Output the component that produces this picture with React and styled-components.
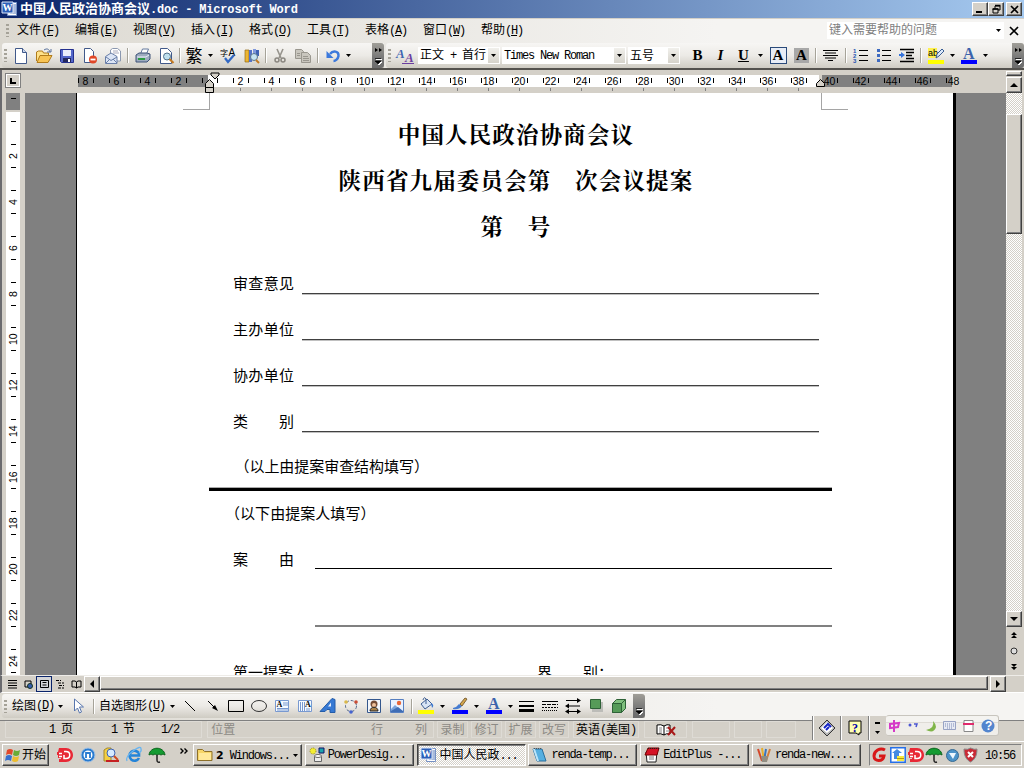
import React from "react";
import styled, { createGlobalStyle, css } from "styled-components";

const GlobalStyle = createGlobalStyle`
  html, body { margin: 0; padding: 0; background: #d4d0c8; overflow: hidden; }
  * { box-sizing: border-box; }
  svg { display: block; flex: none; overflow: visible; }
`;

const FACE = "#d4d0c8";
const raised = css`
  background: ${FACE};
  border: 1px solid;
  border-color: #fff #404040 #404040 #fff;
  box-shadow: inset -1px -1px #808080;
`;

const Desktop = styled.div`
  width: 1024px;
  height: 768px;
  display: flex;
  flex-direction: column;
  background: ${FACE};
  color: #000;
  overflow: hidden;
  font: 12px/14px "Liberation Sans", "Noto Sans CJK SC", sans-serif;
  white-space: pre;
`;

/* ---------- text ---------- */
const Latin = styled.span`
  font-family: "Liberation Mono", monospace;
  font-size: ${(p) => p.$size}px;
  letter-spacing: ${(p) => p.$ls}px;
  u { text-underline-offset: 1px; }
`;
const Mix = ({ children, size = 12, ls = -1.2 }) =>
  String(children).split(/([\x20-\x7e]+)/).map((s, i) =>
    i % 2 ? (
      <Latin key={i} $size={size} $ls={ls}>
        {/^\([A-Z]\)$/.test(s) ? <>(<u>{s[1]}</u>)</> : s}
      </Latin>
    ) : s
  );

/* ---------- title bar ---------- */
const TitleBar = styled.header`
  height: 18px;
  flex: none;
  display: flex;
  align-items: center;
  padding: 0 2px;
  background: linear-gradient(90deg, #0a246a, #a6caf0);
  color: #fff;
  font-size: 13px;
  font-weight: 700;
`;
const TitleText = styled.div`
  flex: 1;
  padding-left: 2px;
  line-height: 17px;
`;
const WinButton = styled.div`
  width: 16px;
  height: 14px;
  margin-left: ${(p) => p.$ml || 0}px;
  display: flex;
  align-items: center;
  justify-content: center;
  ${raised}
`;

/* ---------- bars ---------- */
const MenuBar = styled.nav`
  height: 25px;
  flex: none;
  display: flex;
  align-items: center;
  border-top: 1px solid ${FACE};
  background: linear-gradient(90deg, #dcd9d1, #f5f4f2 70%);
  padding: 0 0 1px 4px;
`;
const Grip = styled.i`
  width: 3px;
  height: 13px;
  margin: 0 ${(p) => p.$r || 3}px 0 2px;
  flex: none;
  background: repeating-linear-gradient(#a5a298 0 2px, transparent 2px 4px);
`;
const MenuItem = styled.div`
  width: 58px;
  padding-left: 5px;
`;
const Help = styled.div`
  margin-left: auto;
  width: 177px;
  height: 17px;
  margin-top: -1px;
  padding: 0 3px 0 2px;
  display: flex;
  align-items: center;
  justify-content: space-between;
  background: #fff;
  color: #808080;
`;
const HelpClose = styled.div`
  width: 20px;
  display: flex;
  justify-content: center;
`;
const BarStrip = styled.div`
  height: 27px;
  flex: none;
  display: flex;
  background: linear-gradient(90deg, #dcd9d1, #f5f4f2 70%);
  border-bottom: 2px solid #54524e;
`;
const Bar = styled.div`
  width: ${(p) => p.$w}px;
  margin-left: 2px;
  display: flex;
  align-items: center;
  background: linear-gradient(#f7f6f4, #eceae6 50%, #cfccc3);
  border-radius: 3px 0 0 3px;
  flex: none;
`;
const Slot = styled.div`
  width: ${(p) => p.$w || 23}px;
  height: 22px;
  flex: none;
  display: flex;
  align-items: center;
  justify-content: center;
`;
const Divider = styled.i`
  width: 2px;
  height: 15px;
  margin: 0 ${(p) => p.$m ?? 2.5}px;
  flex: none;
  border-left: 1px solid #a6a399;
  border-right: 1px solid #fff;
`;
const Overflow = styled.div`
  width: 12px;
  align-self: stretch;
  margin-left: auto;
  flex: none;
  display: flex;
  flex-direction: column;
  justify-content: space-between;
  align-items: center;
  padding: 5px 0 3px;
  background: linear-gradient(#a09e98, #777 60%, #6c6c6c);
  border-radius: 0 3px 3px 0;
`;
const Combo = styled.div`
  width: ${(p) => p.$w}px;
  height: 17px;
  margin-right: 2px;
  flex: none;
  display: flex;
  align-items: center;
  justify-content: space-between;
  padding: 0 1px 0 2px;
  background: #fff;
`;
const ComboButton = styled.div`
  width: 11px;
  height: 15px;
  display: flex;
  align-items: center;
  justify-content: center;
  background: linear-gradient(#f1f0ec, #d6d3cb);
`;
const Letter = styled.span`
  font: bold 15px/15px "Liberation Serif", serif;
  font-style: ${(p) => (p.$italic ? "italic" : "normal")};
  text-decoration: ${(p) => (p.$under ? "underline" : "none")};
  ${(p) => p.$box && css`
    width: 15px; height: 15px; text-align: center;
    outline: ${p.$box === "line" ? "1px solid #2a4a7a" : "none"};
    background: ${p.$box === "line" ? "#e8edf6" : "#a8a8a8"};
  `}
`;
const Fan = styled.span`
  font: 17px/17px "Noto Sans CJK SC", sans-serif;
  margin-top: -2px;
`;

/* ---------- ruler ---------- */
const RulerArea = styled.div`
  height: 23px;
  flex: none;
  display: flex;
  border-left: 2px solid #6a6a6e;
  padding-top: 5px;
  position: relative;
`;
const TabBox = styled.div`
  width: 16px;
  height: 15px;
  margin: -2px 57px 0 3px;
  display: flex;
  align-items: center;
  justify-content: center;
  border: 1px solid #808080;
  outline: 1px solid #fff;
  outline-offset: -2px;
`;
const HRuler = styled.div`
  width: 874px;
  height: 12px;
  display: flex;
  flex: none;
  background: linear-gradient(90deg, #808080 130px, #fff 130px 741px, ${FACE} 741px 744px, #808080 744px);
`;
const HCell = styled.div`
  width: 31px;
  height: 16px;
  flex: none;
  display: grid;
  grid-template-rows: 12px 4px;
  font: 10.5px/10px "Liberation Sans", sans-serif;
  text-align: center;
  &:first-child { margin-left: -8px; }
`;
const HCellTop = styled.div`
  display: flex;
  justify-content: center;
  align-items: center;
  padding-bottom: 1px;
  span { width: 14px; display: flex; justify-content: center; }
  i { width: 1px; height: 5px; background: ${(p) => (p.$hide ? "transparent" : "#000")}; }
`;
const Tick = styled.i`
  width: 1px;
  height: 3px;
  margin: 1px auto 0 14.5px;
  background: #808080;
`;
const Markers = styled.svg`
  position: absolute;
  left: ${(p) => p.$x}px;
  top: 2px;
`;
const ScrollTop = styled.div`
  width: 17px;
  margin: -4px 1px 0 auto;
  display: flex;
  flex-direction: column;
  gap: 1px;
`;
const ScrollButton = styled.div`
  width: 16px;
  height: ${(p) => p.$h || 16}px;
  flex: none;
  display: flex;
  align-items: center;
  justify-content: center;
  ${raised}
`;

/* ---------- work area ---------- */
const Work = styled.main`
  height: 582px;
  flex: none;
  display: flex;
  overflow: hidden;
  border-left: 2px solid #6a6a6e;
  background: #808080;
`;
const VRuler = styled.div`
  width: 23px;
  flex: none;
  padding-left: 4px;
  border-right: 5px solid ${FACE};
  background: ${FACE};
`;
const VBand = styled.div`
  height: 582px;
  overflow: hidden;
  background: linear-gradient(#808080 17px, ${FACE} 17px 19px, #fff 19px);
`;
const VCell = styled.div`
  height: 45.9px;
  display: flex;
  flex-direction: column;
  align-items: center;
  justify-content: center;
  &:first-child { margin-top: -6px; }
  i { width: 5px; height: 1px; background: #000; }
  span {
    height: 22px;
    display: flex;
    align-items: center;
    font: 10.5px/10px "Liberation Sans", sans-serif;
    writing-mode: vertical-rl;
    transform: rotate(180deg);
    justify-content: center;
  }
`;
const Page = styled.article`
  width: 880px;
  height: 582px;
  margin-left: 51px;
  flex: none;
  overflow: hidden;
  background: #fff;
  border-left: 1px solid #000;
  border-right: 3px solid #000;
  font: 15px/46px "Noto Sans CJK SC", sans-serif;
`;
const Corners = styled.div`
  height: 17px;
  display: flex;
  justify-content: space-between;
  padding: 0 105px 0 106px;
  i { width: 27px; border: 0 solid #a5a5a5; border-bottom-width: 1px; }
  i:first-child { border-right-width: 1px; }
  i:last-child { border-left-width: 1px; }
`;
const Heading = styled.h1`
  margin: 0;
  height: 46px;
  padding-left: 2px;
  text-align: center;
  font: 700 22.5px/46px "Noto Serif CJK SC", "Noto Sans CJK SC", sans-serif;
  letter-spacing: 1.15px;
`;
const Form = styled.section`
  margin-top: 12px;
  padding: 0 121px 0 156px;
`;
const Row = styled.div`
  height: ${(p) => p.$h || 46}px;
  display: flex;
  justify-content: space-between;
`;
const Label = styled.span`
  width: 61px;
  display: flex;
  justify-content: space-between;
`;
const Line = styled.i`
  width: 517px;
  height: 2px;
  margin: ${(p) => p.$t || 33}px ${(p) => p.$r ?? 13}px 0 0;
  background: ${(p) => p.$c || "linear-gradient(#404040 50%, #c0c0c0 50%)"};
`;
const Note = styled.div`
  height: ${(p) => p.$h}px;
  padding-left: ${(p) => p.$pl}px;
  line-height: 44px;
  margin-left: -8px;
  letter-spacing: ${(p) => p.$ls}px;
`;
const Thick = styled.hr`
  height: 4px;
  margin: 0 0 0 -24px;
  width: 623px;
  border: 0;
  background: linear-gradient(#aaa 1px, #000 1px);
`;
const VScroll = styled.div`
  width: 18px;
  margin-left: auto;
  flex: none;
  display: flex;
  flex-direction: column;
  border-right: 2px solid ${FACE};
  background: ${FACE};
`;
const track = css`background: repeating-conic-gradient(#fff 0 25%, ${FACE} 0 50%) 0 0 / 2px 2px;`;
const Track = styled.div`
  height: ${(p) => p.$h}px;
  flex: none;
  ${track}
`;
const SmallButton = styled.div`
  height: 16px;
  display: flex;
  align-items: center;
  justify-content: center;
`;
const HScroll = styled.div`
  height: 18px;
  flex: none;
  display: flex;
  padding: 0 18px 2px 2px;
  border-left: 2px solid #6a6a6e;
  border-bottom: 1px solid #fff;
  border-top: 1px solid #eeece8;
`;
const View = styled.div`
  width: 16px;
  height: 16px;
  display: flex;
  align-items: center;
  justify-content: center;
  ${(p) => p.$on && `background:#d4d5d8; border:1px solid #0a246a;`}
`;
const HThumb = styled.div`
  flex: 1;
  margin-right: 2px;
  ${raised}
`;

/* ---------- drawing and status ---------- */
const DrawStrip = styled.div`
  height: 28px;
  flex: none;
  display: flex;
  padding: 1px 0 2px;
  background: linear-gradient(90deg, #dcd9d1, #f5f4f2 70%);
  border-bottom: 1px solid #808080;
`;
const Status = styled.div`
  height: 20px;
  flex: none;
  display: flex;
  align-items: center;
  padding: 0 0 3px 5px;
  position: relative;
`;
const Panel = styled.div`
  width: ${(p) => p.$w}px;
  height: 17px;
  margin-right: ${(p) => p.$mr || 3}px;
  flex: none;
  display: flex;
  align-items: center;
  justify-content: ${(p) => (p.$left ? "flex-start" : "center")};
  border: 1px solid #dedbd5;
  color: ${(p) => (p.$dim ? "#8c8a85" : "#000")};
`;
const Cell = styled.span`
  width: ${(p) => p.$w}px;
  flex: none;
`;
const Clock = styled(Cell)`
  margin-left: auto;
`;
const Ime = styled.div`
  position: absolute;
  left: 812px;
  top: -5px;
  width: 188px;
  height: 24px;
  display: flex;
  z-index: 2;
`;
const ImeButton = styled.div`
  width: ${(p) => p.$w}px;
  display: flex;
  align-items: center;
  justify-content: center;
  background: ${FACE};
  border-left: 1px solid #808080;
  box-shadow: inset 1px 0 #fff;
`;
const ImeTools = styled.div`
  width: 113px;
  height: 21px;
  margin-top: -1px;
  display: flex;
  align-items: center;
  justify-content: space-around;
  background: linear-gradient(#f4f3f0 6px, #dedbd5 6px 7px, #f0eeea 7px);
  border: 1px solid #c8c5be;
  border-left: 0;
  border-radius: 3px;
`;

/* ---------- taskbar ---------- */
const TaskBar = styled.footer`
  height: 27px;
  flex: none;
  display: flex;
  align-items: flex-start;
  padding: 2px 2px 0;
  border-top: 1px solid #fff;
`;
const Start = styled.div`
  width: 47px;
  height: 22px;
  display: flex;
  align-items: center;
  gap: 1px;
  padding-left: 2px;
  ${raised}
`;
const Quick = styled.div`
  width: 144px;
  height: 22px;
  display: flex;
  align-items: center;
  padding-left: 4px;
`;
const Task = styled.div`
  width: ${(p) => p.$w || 109}px;
  height: 22px;
  margin-right: 2.8px;
  flex: none;
  display: flex;
  align-items: center;
  gap: 3px;
  padding: 0 3px;
  ${raised}
  ${(p) => p.$on && css`
    ${track}
    border-color: #404040 #fff #fff #404040;
    box-shadow: inset 1px 1px #808080;
  `}
`;
const Grow = styled.span`
  flex: 1;
  b { font: bold 11px/14px "DejaVu Sans", sans-serif; }
`;
const Tray = styled.div`
  width: 153px;
  height: 22px;
  margin-left: auto;
  display: flex;
  align-items: center;
  padding: 0 6px 0 1px;
  border: 1px solid;
  border-color: #808080 #fff #fff #808080;
`;

/* ---------- icons ---------- */
const Svg = ({ s = 16, h, children }) => (
  <svg width={s} height={h || s} viewBox={`0 0 ${s} ${h || s}`} fill="none">{children}</svg>
);
const Caret = () => <Svg s={5} h={3}><path d="M0 0h5L2.5 3z" fill="#000" /></Svg>;
const Tri = ({ d }) => <Svg s={8}><path d={{ up: "M4 2l4 4H0z", down: "M0 2h8L4 6z", left: "M6 0v8L2 4z", right: "M2 0v8l4-4z" }[d]} fill="#000" /></Svg>;
const X = ({ s = 7 }) => <Svg s={s}><path d={`M0 0L${s} ${s}M${s} 0L0 ${s}`} stroke="#000" strokeWidth="1.7" /></Svg>;
const page = "M2.5.5h7l4 4v11h-11z";
const edge = "#41598a";
const T = (p) => <text fontFamily="Liberation Serif" fontWeight="bold" {...p} />;

const icons = {
  word: <Svg><path d="M6.5 1.5h8v13h-9z" fill="#fff" stroke="#7590c4" /><path d="M11 4h3M11 6h3M11 8h3M10 10h4M8 12h6" stroke="#5576b8" /><path d="M0 1h11v11H0z" fill="#2c5fb8" stroke="#dce6f8" /><T x="0.500" y="10" fontSize="10" fill="#fff">W</T></Svg>,
  fresh: <Svg><path d={page} fill="#fff" stroke={edge} /><path d="M9.500.500v4h4" fill="#c9d6ee" stroke={edge} /></Svg>,
  open: <Svg><path d="M.5 13V4l2-1h4l1 2h5v3" fill="#ffe28a" stroke="#b07b1b" /><path d="M1 14.500l3-7h12l-4 7z" fill="#f8c454" stroke="#b07b1b" /><path d="M8 2c3-2 5-1 6 2m-3 0h4V1" stroke="#58719c" /></Svg>,
  save: <Svg><path d="M1.500 1.500h13v13h-12l-1-1z" fill="#5467c9" stroke="#24308f" /><path d="M4 2h8v6H4z" fill="#e9edfb" /><path d="M4 10h8v4H4z" fill="#23285c" /><path d="M9 11h2v3H9z" fill="#fff" /></Svg>,
  deny: <Svg><path d="M2.500.5h6l3 3v11h-9z" fill="#fff" stroke={edge} /><circle cx="11" cy="11.500" r="4" fill="#e04727" /><path d="M8.500 11.500h5" stroke="#fff" strokeWidth="1.800" /></Svg>,
  mail: <Svg><path d="M5.500 7V2l2-1.500h5l3 2.500v10h-4" fill="#fff" stroke="#8b98b0" /><path d="M8 3h5M8 5h6" stroke="#aab" /><path d="M.5 8.500L6 5l6 3.500v7H.5z" fill="#dce5f5" stroke="#6a7fa8" /><path d="M1 9l5 3.500L12 9M1 15l4-4M12 15l-4-4" stroke="#6a7fa8" /></Svg>,
  print: <Svg><path d="M5.500 6l2-5h6l-2 5" fill="#fff" stroke="#657a9f" /><path d="M1 7l3-2h8l3 1v5l-3 3H1z" fill="#9dabbf" stroke="#3e5278" /><path d="M2 9h9l3-2" stroke="#eef3fc" /><path d="M3 11h7" stroke="#2b9a42" strokeWidth="2" /></Svg>,
  preview: <Svg><path d={page} fill="#fff" stroke={edge} /><circle cx="9" cy="8.500" r="3.500" fill="#bfe0ee" stroke="#50708c" /><path d="M11.500 11l4 4" stroke="#c47b23" strokeWidth="2.200" /></Svg>,
  spell: <Svg><text x="0" y="8" fontFamily="Noto Sans CJK SC" fontSize="8" fill="#000">字</text><text x="8.500" y="8" fontFamily="Liberation Sans" fontSize="10" fill="#000">A</text><path d="M5 10l3 4 6-7" stroke="#3269c4" strokeWidth="2.300" /></Svg>,
  research: <Svg><path d="M1 2h4v12H1z" fill="#edb532" stroke="#946c19" strokeWidth=".7" /><path d="M5 2h3v12H5z" fill="#5573c8" /><path d="M9 1h3v5H9z" fill="#8099dd" /><path d="M12 2h3v6h-3z" fill="#3f62b4" /><circle cx="10" cy="9" r="3.500" fill="#c7e4f1" stroke="#58738c" /><path d="M12 12l3 3" stroke="#c47b23" strokeWidth="2" /></Svg>,
  cut: <Svg><path d="M5 1l4 9M11 1L7 10" stroke="#96938c" strokeWidth="1.600" /><circle cx="5" cy="12" r="2" stroke="#8a8780" strokeWidth="1.500" /><circle cx="11" cy="12" r="2" stroke="#8a8780" strokeWidth="1.500" /></Svg>,
  copy: <Svg><path d="M.5 1.500h6l2 2v7h-8z" fill="#c9c6be" stroke="#99968e" /><path d="M6.500 4.500h6l3 3v7h-9z" fill="#c9c6be" stroke="#99968e" /><path d="M8 8.500h5M8 10.500h6M8 12.500h6M2 5.500h3M2 7.500h3" stroke="#99968e" /></Svg>,
  undo: <Svg><path d="M5 6c3-4 9-3 8.500 2-.5 3-3 5-5 5" stroke="#3c79dc" strokeWidth="2.400" /><path d="M1.500 3v7h7z" fill="#3c79dc" /></Svg>,
  styles: <Svg><T x="-2" y="10" fontSize="13" fontStyle="italic" fill="#3e66b0">A</T><T x="7" y="14" fontSize="13" fontStyle="italic" fill="#6b3fa0">A</T><path d="M4 15.500h12" stroke="#6b3fa0" /></Svg>,
  center: <Svg s={15}><path d="M0 2.500h15M2 5h11M0 7.500h15M2 10h11M5 12.500h5" stroke="#000" /></Svg>,
  numbers: <Svg><path d="M6 2.500h9M6 7.500h9M6 12.500h9" stroke="#000" /><g fill="#2453b0" fontFamily="Liberation Sans" fontWeight="bold" fontSize="6"><text x="0" y="5">1</text><text x="0" y="10">2</text><text x="0" y="15">3</text></g></Svg>,
  bullets: <Svg><path d="M6 2.500h9M6 7.500h9M6 12.500h9" stroke="#000" /><path d="M1 1h3v3H1zM1 6h3v3H1zM1 11h3v3H1z" fill="#3e6ac0" /></Svg>,
  indent: <Svg><path d="M1 1.500h14M7 4.500h8M7 7.500h6M7 10.500h8M1 13.500h14" stroke="#000" strokeWidth="1.500" /><path d="M0 6h2V4l4 3-4 3V8H0z" fill="#3573db" /></Svg>,
  highlight: <Svg h={18}><path d="M0 1h9v10H0z" fill="#fff14f" /><text x="0" y="9" fontSize="9" fontFamily="Liberation Sans" fill="#000">ab</text><path d="M8 11l1-4 5-5 2 2-5 5z" fill="#dce9fa" stroke="#375c92" /><path d="M0 13h16v4H0z" fill="#ff0" /></Svg>,
  color: <Svg h={18}><T x="2" y="12" fontSize="16" fill="#3c63ac">A</T><path d="M0 13h16v4H0z" fill="#00f" /></Svg>,
  cursor: <Svg><path d="M4.500 1v12l3-3 2 5 2-1-2-5h4z" fill="#fff" stroke="#5876ae" /></Svg>,
  line: <Svg><path d="M3 3l10 10" stroke="#000" /></Svg>,
  arrow: <Svg><path d="M3 3l8 8" stroke="#000" /><path d="M13 13L7 10l3-3z" fill="#000" /></Svg>,
  rect: <Svg><path d="M.5 2.500h15v11H.5z" stroke="#000" /></Svg>,
  oval: <Svg><ellipse cx="8" cy="8" rx="7.500" ry="5.500" stroke="#333" /></Svg>,
  textbox: <Svg><path d="M1.500 2.500h13v11h-13z" fill="#f7faff" stroke="#7899d0" /><T x="2.500" y="9" fontSize="8" fill="#000">A</T><path d="M9 5h5M9 7h5M3 10.500h11M3 12h11" stroke="#7899d0" /></Svg>,
  vtextbox: <Svg><path d="M1.500 2.500h13v11h-13z" fill="#f7faff" stroke="#7899d0" /><T x="8" y="9" fontSize="8" fill="#000">A</T><path d="M3.500 4v9M5.500 4v9M7.500 4v9M10 10v3M12 10v3" stroke="#7899d0" /></Svg>,
  wordart: <Svg><path d="M0 13.500L12 .5l3 1v13h-5v-3H7l-2 2z" fill="#3679d4" stroke="#245ca8" /><path d="M8 8.500l3-4v4z" fill="#e7effc" /></Svg>,
  diagram: <Svg><circle cx="8" cy="8" r="5.500" stroke="#53698e" strokeDasharray="3 2" /><circle cx="3" cy="4" r="1.800" fill="#dab94c" /><circle cx="13" cy="4" r="1.800" fill="#c84c34" /><circle cx="8" cy="14" r="1.800" fill="#4663cf" /></Svg>,
  clipart: <Svg><path d="M1.500 1.500h13v13h-13z" fill="#f2f5fa" stroke="#34578d" /><circle cx="8" cy="6" r="3.500" fill="#734b34" /><circle cx="8" cy="7" r="2" fill="#efc19a" /><path d="M4 13c0-5 8-5 8 0z" fill="#a98148" stroke="#222" /></Svg>,
  picture: <Svg><path d="M1.500 1.500h13v13h-13z" fill="#eaf2ff" stroke="#567fc0" /><circle cx="10" cy="5" r="2.200" fill="#e96638" /><path d="M2 11l4-4 8 7H2z" fill="#7ba3dc" /><path d="M2 13l7-4 5 4v1H2z" fill="#3f6db5" /></Svg>,
  fill: <Svg h={18}><path d="M3 7l6-5 5 5-7 5z" fill="#d8e4f5" stroke="#3e5e92" /><path d="M8 7V2q-2-3-3 1" stroke="#3e5e92" /><path d="M13 6q4 2 1 5z" fill="#3976d0" /><path d="M0 13h16v4H0z" fill="#ff0" /></Svg>,
  brush: <Svg h={18}><path d="M1 11q4-1 6-4l3 2q-3 4-9 3z" fill="#467cd0" /><path d="M8 7l5-6 2 1-5 7z" fill="#d5a64b" stroke="#7d6338" /><path d="M0 13h16v4H0z" fill="#00f" /></Svg>,
  weights: <Svg><path d="M0 3.500h15" stroke="#000" /><path d="M0 8h15" stroke="#000" strokeWidth="2" /><path d="M0 12.500h15" stroke="#000" strokeWidth="3" /></Svg>,
  dashes: <Svg><path d="M0 3.500h16" stroke="#000" /><path d="M0 6.500h16" stroke="#000" strokeDasharray="4 1" /><path d="M0 9.500h16" stroke="#000" strokeDasharray="2 1" /><path d="M0 12.500h16" stroke="#000" strokeDasharray="1 1" /></Svg>,
  arrows: <Svg><path d="M1 2.500h12M2 8h13M2 13.500h12" stroke="#000" /><path d="M12 0l4 2.500L12 5zM4 5.500L0 8l4 2.500zM4 11l-4 2.500L4 16zM12 11l4 2.500-4 2.500z" fill="#000" /></Svg>,
  shadow: <Svg><path d="M4 4h11v10H4z" fill="#bcbcb8" /><path d="M2.500 1.500h10v9h-10z" fill="#569b58" stroke="#2e6237" /></Svg>,
  cube: <Svg><path d="M1.500 5.500l4-4h9v9l-4 4h-9z" fill="#7fc07d" stroke="#2e6237" /><path d="M1.500 5.500h9v9h-9z" fill="#559b58" stroke="#2e6237" /><path d="M10.500 5.500l4-4" stroke="#2e6237" /></Svg>,
  book: <Svg s={20} h={14}><path d="M1 2q4-1 7 1 3-2 6-1v9q-4-1-6 1-3-2-7-1z" fill="#fff" stroke="#000" /><path d="M8 3v9" stroke="#000" /><path d="M3 5h3M3 7h3M3 9h3M10 5h3M10 8h3" stroke="#888" /><path d="M12 4l7 8M19 4l-7 8" stroke="#a81818" strokeWidth="2" /></Svg>,
  flag: <Svg><path d="M2 3q3-2 6 0L7 8Q4 6 1 8z" fill="#e1492b" /><path d="M9 3q3 2 6 0l-1 5q-3 2-6 0z" fill="#69ac36" /><path d="M1 9q3-2 6 0l-1 5q-3-2-6 0z" fill="#3670ce" /><path d="M8 9q3 2 6 0l-1 5q-3 2-6 0z" fill="#edbd2f" /></Svg>,
  d: <Svg><path d="M2 1h7c4 0 7 3 7 7s-3 7-7 7H2v-3h2v-1H1V8H0V5h1z" fill="#e82936" /><path d="M7 4.500h2c5 0 5 7 0 7H7V8M2 6.500h3M2 9.500h3" stroke="#fff" strokeWidth="1.500" /></Svg>,
  blue: <Svg><circle cx="8" cy="8" r="7" fill="#287bd0" stroke="#a7c4e4" /><circle cx="8" cy="8" r="4.500" fill="#fff" /><path d="M6 11V6h4v5" stroke="#287bd0" strokeWidth="1.800" /></Svg>,
  mag: <Svg><path d="M1 3l3-2h4v13H1z" fill="#f4cf43" stroke="#a48a2c" /><circle cx="8" cy="6" r="4" fill="#d6eaff" stroke="#3c63b5" /><path d="M11 9l4 4" stroke="#d0491f" strokeWidth="2" /><path d="M3 14h13" stroke="#c52022" strokeWidth="2" /></Svg>,
  ie: <Svg><path d="M13 11a5 5 0 1 1 0-4.500v2H5" stroke="#2484d8" strokeWidth="2.600" /><path d="M1 14Q-1 10 7 4t8-2q1 2-2 4" stroke="#69b4ef" strokeWidth="1.300" /></Svg>,
  umbrella: <Svg><path d="M0 8c1-9 15-9 16 0q-2-2-4 0-2-2-4 0-2-2-4 0-2-2-4 0z" fill="#149b31" stroke="#09631b" /><path d="M8 8v5q0 3 3 2" stroke="#222" strokeWidth="1.500" /></Svg>,
  folder: <Svg><path d="M.5 13.500v-11h5l2 2h7.500v9z" fill="#f6d568" stroke="#8d702a" /><path d="M2 6h12v7H2z" fill="#ffe899" /></Svg>,
  power: <Svg><circle cx="4" cy="4" r="3" fill="#f4ed32" stroke="#8b861a" strokeDasharray="1 1" /><path d="M10 1h5v5h-5z" fill="#1ca3ac" stroke="#116" /><path d="M5.500 9.500h7v5h-7z" fill="#ececec" stroke="#666" /><ellipse cx="9" cy="9" rx="3.500" ry="1.500" fill="#fff" stroke="#666" /></Svg>,
  note: <Svg><path d="M1 2h9l4 12H5z" fill="#55afe0" stroke="#2a6f9d" /><path d="M1 2h2l4 12H5z" fill="#bde5fa" /><path d="M2 1.500h8" stroke="#555" strokeDasharray="1 1" /></Svg>,
  edit: <Svg><path d="M2 5h11l-1 10H3z" fill="#fff" stroke="#222" /><path d="M4 1h11l-2 7H1z" fill="#d51325" stroke="#700" /><path d="M5 10h5M5 12h5" stroke="#777" /><path d="M4 1.500h11" stroke="#222" strokeDasharray="1 1" /></Svg>,
  pens: <Svg><path d="M2 2l4 12" stroke="#d44729" strokeWidth="2" /><path d="M6 1l2 13" stroke="#e5ae2e" strokeWidth="2" /><path d="M10 2L8 14" stroke="#3974bb" strokeWidth="2" /><path d="M14 2l-4 12" stroke="#d67c37" strokeWidth="2" /><path d="M5 9h7l-1 6H6z" fill="#918e83" /></Svg>,
  g: <Svg><path d="M13 3C8 0 2 4 2 9c0 6 9 6 10 0H7" stroke="#d81818" strokeWidth="3" /></Svg>,
  doc: <Svg><path d="M.8.8h14.400v14.400H.8z" fill="#fff" stroke="#256fe8" strokeWidth="1.500" /><path d="M2 6l5-4 5 4H9v6H4V6z" fill="#4589e2" /><path d="M7 9h7v5H7z" fill="#f8e93d" /><path d="M7 11.500h7" stroke="#b59c0e" /></Svg>,
  globe: <Svg s={15}><circle cx="7.500" cy="7.500" r="6" fill="#4d93c8" stroke="#376b93" /><path d="M4 5l7 0-3 6-2-3z" fill="#eef8ff" /></Svg>,
  shield: <Svg s={15} h={16}><path d="M7.500 1q4 2 6.500 1c0 8-3 11-6.500 13C4 13 1 10 1 2q4 1 6.500-1z" fill="#c92a35" stroke="#888" /><path d="M5 5l5 5M10 5l-5 5" stroke="#fff" strokeWidth="2" /></Svg>,
  chevrons: <Svg s={8} h={6}><path d="M.5.5L3 3 .5 5.500M4.500.5L7 3 4.500 5.500" stroke="#000" strokeWidth="1.400" /></Svg>,
};
const ChevronSlot = styled.div`
  margin: -9px 0 0 12px;
`;
const I = ({ n, w }) => <Slot $w={w}>{icons[n]}</Slot>;
const Drop = ({ w = 11 }) => <Slot $w={w}><Caret /></Slot>;
const More = ({ single }) => (
  <Overflow>
    <Svg s={7} h={5}>{!single && <path d="M0 0l3 2-3 2zM4 0l3 2-3 2z" fill="#000" />}</Svg>
    <Svg s={7} h={7}><path d="M1 1.500h6M1 4h6L4 7z" stroke="#fff" fill="#fff" /><path d="M0 .5h6M0 3h6L3 6z" stroke="#000" strokeWidth=".7" fill="#000" /></Svg>
  </Overflow>
);

const menus = ["文件(F)", "编辑(E)", "视图(V)", "插入(I)", "格式(O)", "工具(T)", "表格(A)", "窗口(W)", "帮助(H)"];
const hNumbers = Array.from({ length: 29 }, (_, i) => i * 2 - 8);
const fields = ["审查意见", "主办单位", "协办单位", "类别"];
const Spread = ({ children }) => <Label>{[...children].map((c) => <span key={c}>{c}</span>)}</Label>;

export default function App() {
  return (
    <Desktop>
      <GlobalStyle />
      <TitleBar>
        {icons.word}
        <TitleText><Mix size={12} ls={-0.17}>中国人民政治协商会议.doc - Microsoft Word</Mix></TitleText>
        <WinButton><Svg s={8}><path d="M0 7h6" stroke="#000" strokeWidth="2" /></Svg></WinButton>
        <WinButton><Svg s={9}><path d="M3 1h5v4H6M3 1v3M1 4h5v4H1z" stroke="#000" /><path d="M3 .5h5.500M.5 4h6" stroke="#000" strokeWidth="1.500" /></Svg></WinButton>
        <WinButton $ml={2}><X /></WinButton>
      </TitleBar>

      <MenuBar>
        <Grip />
        {menus.map((m) => <MenuItem key={m}><Mix>{m}</Mix></MenuItem>)}
        <Help>键入需要帮助的问题<Caret /></Help>
        <HelpClose><X s={8} /></HelpClose>
      </MenuBar>

      <BarStrip>
        <Bar $w={382}>
          <Grip $r={2} />
          {["fresh", "open", "save", "deny", "mail"].map((n) => <I key={n} n={n} />)}
          <Divider /><I n="print" /><I n="preview" /><Divider $m={2} />
          <Slot $w={22}><Fan>繁</Fan></Slot><Drop /><I n="spell" w={24} /><I n="research" />
          <Divider $m={1.5} /><I n="cut" /><I n="copy" /><Divider /><I n="undo" /><Drop w={9} />
          <More />
        </Bar>
        <Bar $w={638}>
          <Grip $r={3} />
          <I n="styles" w={24} />
          <Combo $w={82}><span><Mix>正文 + 首行</Mix></span><ComboButton><Caret /></ComboButton></Combo>
          <Combo $w={124}><Mix>Times New Roman</Mix><ComboButton><Caret /></ComboButton></Combo>
          <Combo $w={52}>五号<ComboButton><Caret /></ComboButton></Combo>
          <Slot $w={4} />
          <Slot><Letter>B</Letter></Slot><Slot><Letter $italic>I</Letter></Slot><Slot><Letter $under>U</Letter></Slot><Drop />
          <Slot $w={24}><Letter $box="line">A</Letter></Slot><Slot><Letter $box="fill">A</Letter></Slot>
          <Divider $m={2} /><I n="center" /><Divider />
          <I n="numbers" /><I n="bullets" /><I n="indent" /><Divider $m={2} />
          <I n="highlight" /><Drop w={10} /><I n="color" w={24} /><Drop w={9} />
          <More />
        </Bar>
      </BarStrip>

      <RulerArea>
        <TabBox><Svg s={6}><path d="M1 0v5h5" stroke="#000" strokeWidth="2" /></Svg></TabBox>
        <HRuler>
          {hNumbers.map((n) => (
            <HCell key={n}>
              <HCellTop $hide={n === 48}>
                <i style={{ background: n === 40 ? "transparent" : "#000" }} />
                <span>{n === 0 ? "" : Math.abs(n)}</span><i />
              </HCellTop>
              {n > 0 && n < 40 && <Tick />}
            </HCell>
          ))}
        </HRuler>
        <Markers $x={203} width="14" height="22"><path d="M4.500 1.500h8v2l-4 4-4-4z" fill={FACE} stroke="#000" transform="translate(1.500 -.5)" /><path d="M.5 15.500v-4l4-4 4 4v4zM.5 15.500h8v5h-8z" fill={FACE} stroke="#000" /></Markers>
        <Markers $x={814} width="10" height="18"><path d="M.5 14.500v-3l4-4 4 4v3z" fill={FACE} stroke="#000" /></Markers>
        <ScrollTop><ScrollButton $h={5} /><ScrollButton><Tri d="up" /></ScrollButton></ScrollTop>
      </RulerArea>

      <Work>
        <VRuler>
          <VBand>
            {Array.from({ length: 13 }, (_, i) => <VCell key={i}><i /><span>{i ? i * 2 : ""}</span><i /></VCell>)}
          </VBand>
        </VRuler>
        <Page>
          <Corners><i /><i /></Corners>
          <Heading>中国人民政治协商会议</Heading>
          <Heading>陕西省九届委员会第　次会议提案</Heading>
          <Heading>第　号</Heading>
          <Form>
            {fields.map((f) => <Row key={f}><Spread>{f}</Spread><Line /></Row>)}
            <Note $h={43} $pl={9.5} $ls={-0.05}>（以上由提案审查结构填写）</Note>
            <Thick />
            <Note $h={45} $pl={0} $ls={0.05}>（以下由提案人填写）</Note>
            <Row><Spread>案由</Spread><Line $t={32} $r={0} $c="linear-gradient(#000 50%, #fff 50%)" /></Row>
            <Row $h={67}><span /><Line $t={43} $r={0} $c="#808080" /></Row>
            <Row><Cell $w={304}>第一提案人：</Cell><Spread>界别</Spread><Cell $w={234}>：</Cell></Row>
          </Form>
        </Page>
        <VScroll>
          <Track $h={21} /><ScrollButton $h={120} /><Track $h={377} />
          <ScrollButton><Tri d="down" /></ScrollButton>
          <SmallButton><Svg s={6} h={7}><path d="M3 0l3 3H0zM3 3l3 3H0z" fill="#000" /></Svg></SmallButton>
          <SmallButton><Svg s={8}><circle cx="4" cy="4" r="3" fill="#ddd" stroke="#333" /></Svg></SmallButton>
          <SmallButton><Svg s={6} h={7}><path d="M0 0h6L3 3zM0 3h6L3 6z" fill="#000" /></Svg></SmallButton>
        </VScroll>
      </Work>

      <HScroll>
        <View><Svg s={9}><path d="M0 .5h9M0 3h9M0 5.500h9M0 8h9" stroke="#000" /></Svg></View>
        <View><Svg s={9}><path d="M1 1h6v6H1z" stroke="#000" /><circle cx="6" cy="6" r="2.500" fill="#365db0" stroke="#132" /></Svg></View>
        <View $on><Svg s={9}><path d="M.5.5h8v7h-8zM2.500 2.500h4M2.500 5h4" stroke="#000" /></Svg></View>
        <View><Svg s={9}><path d="M0 .5h5M2 3h6M3 5.500h5M2 8h6" stroke="#000" strokeDasharray="3 1" /></Svg></View>
        <View><Svg s={9}><path d="M0 1h3l1.500 1L6 1h3v6H6L4.500 8 3 7H0zM4.500 2v6" stroke="#000" /></Svg></View>
        <ScrollButton><Tri d="left" /></ScrollButton>
        <HThumb />
        <ScrollButton><Tri d="right" /></ScrollButton>
      </HScroll>

      <DrawStrip>
        <Bar $w={643}>
          <Grip $r={5} />
          <Slot $w={42}><Mix>绘图(D)</Mix></Slot><Drop w={12} /><I n="cursor" w={24} /><Divider $m={3} />
          <Slot $w={68}><Mix>自选图形(U)</Mix></Slot><Drop w={12} />
          {["line", "arrow", "rect", "oval", "textbox", "vtextbox", "wordart", "diagram", "clipart", "picture"].map((n) => <I key={n} n={n} w={23.1} />)}
          <Divider $m={2} /><I n="fill" /><Drop w={10} /><I n="brush" w={24} /><Drop w={10} /><I n="color" w={24} /><Drop w={10} />
          {["weights", "dashes", "arrows", "shadow", "cube"].map((n) => <I key={n} n={n} />)}
          <More single />
        </Bar>
      </DrawStrip>

      <Status>
        <Panel $w={197} $mr={5} $left><Cell $w={43} /><Cell $w={62}><Mix>1 页</Mix></Cell><Cell $w={50}><Mix>1 节</Mix></Cell><Mix>1/2</Mix></Panel>
        <Panel $w={227} $left $dim><Cell $w={163}> 位置</Cell><Cell $w={44}>行</Cell>列</Panel>
        {["录制", "修订", "扩展"].map((t) => <Panel key={t} $w={31} $dim>{t}</Panel>)}
        <Panel $w={30} $mr={4} $dim>改写</Panel>
        <Panel $w={66} $mr={5}><Mix>英语(美国)</Mix></Panel>
        <Panel $w={43} $mr={5}>{icons.book}</Panel>
        <Panel $w={38} $mr={4} /><Panel $w={28} $mr={4} /><Panel $w={30} />
        <Ime>
          <ImeButton $w={28}><Svg><path d="M8 0l8 8-8 8-8-8z" fill="#b7b7b7" stroke="#333" /><path d="M8 2l6 6-6 5-6-5z" fill="#fff" /><path d="M5 8l4-4 3 3M7 10l3-3" stroke="#1726c7" strokeWidth="2" /></Svg></ImeButton>
          <ImeButton $w={28}><Svg><path d="M2 1h12v12h-2v2l-3-2H2z" fill="#ffffb0" stroke="#000" /><T x="5" y="12" fontSize="12" fill="#00a">?</T></Svg></ImeButton>
          <ImeButton $w={18}><Svg s={5} h={12}><path d="M0 1h5" stroke="#000" strokeWidth="2" /><path d="M0 9h5l-2.500 3z" fill="#000" /></Svg></ImeButton>
          <ImeTools>
            <Svg s={12}><path d="M1 4l9-1-1 4-8 1zM5 0v12" stroke="#d53ac8" strokeWidth="2" /></Svg>
            <Svg s={10}><circle cx="2" cy="4" r="1.500" fill="#4c57d2" /><path d="M6 3h3l-1 3" stroke="#4c57d2" strokeWidth="1.500" /></Svg>
            <Svg s={12}><path d="M8 1q2 7-7 9 8 4 10-3 0-3-3-6z" fill="#80b549" /></Svg>
            <Svg s={13} h={9}><path d="M.5.5h12v8H.5z" fill="#e7eaf3" stroke="#98a3c4" /><path d="M2 3h9M2 5h9M4 7h5" stroke="#7c8bb7" strokeDasharray="1 1" /></Svg>
            <Svg s={11} h={12}><path d="M1 .5h9v11H1z" fill="#fff" stroke="#888" /><path d="M0 4h11" stroke="#e02b6c" strokeWidth="2" /></Svg>
            <Svg s={14}><circle cx="7" cy="7" r="6.500" fill="#5385ce" /><text x="4" y="11" fontSize="12" fontWeight="bold" fill="#fff" fontFamily="Liberation Sans">?</text></Svg>
          </ImeTools>
        </Ime>
      </Status>

      <TaskBar>
        <Start>{icons.flag}开始</Start>
        <Quick>
          {["d", "blue", "mag", "ie", "umbrella"].map((n) => <I key={n} n={n} />)}
          <ChevronSlot>{icons.chevrons}</ChevronSlot>
        </Quick>
        <Task>{icons.folder}<Grow><b>2</b><Mix> Windows...</Mix></Grow><Caret /></Task>
        <Task>{icons.power}<Mix>PowerDesig...</Mix></Task>
        <Task $on>{icons.word}<span>中国人民政<Mix>...</Mix></span></Task>
        <Task>{icons.note}<Mix>renda-temp...</Mix></Task>
        <Task>{icons.edit}<Mix>EditPlus -...</Mix></Task>
        <Task>{icons.pens}<Mix>renda-new....</Mix></Task>
        <Tray>
          {["g", "doc", "d", "umbrella", "globe", "shield"].map((n) => <I key={n} n={n} w={18} />)}
          <Clock $w={30}><Mix>10:56</Mix></Clock>
        </Tray>
      </TaskBar>
    </Desktop>
  );
}
